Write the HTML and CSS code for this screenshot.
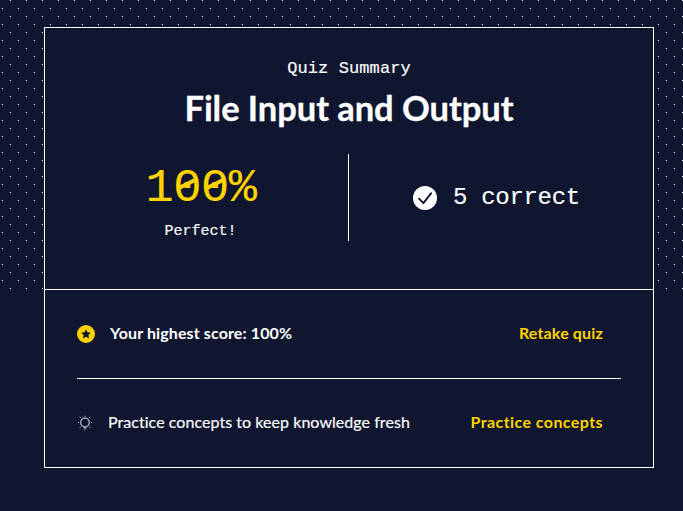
FILE: index.html
```html
<!DOCTYPE html>
<html lang="en">
<head>
<meta charset="utf-8">
<title>Quiz Summary</title>
<link rel="stylesheet" href="styles.css">
</head>
<body>
<div class="page">
  <main class="card">
    <section class="summary">
      <p class="eyebrow">Quiz Summary</p>
      <h1 class="title">File Input and Output</h1>
      <div class="results">
        <div class="score">
          <p class="percent">1<span class="zero">0</span><span class="zero">0</span>%</p>
          <p class="verdict">Perfect!</p>
        </div>
        <div class="tally">
          <svg class="check" viewBox="0 0 24 24" width="24" height="24"><circle cx="12" cy="12" r="12" fill="#fff"/><path d="M6 12.700l4.400 4.400L18.200 7.200" fill="none" stroke="#10162f" stroke-width="1.900" stroke-linecap="round" stroke-linejoin="round"/></svg>
          <span class="correct">5 correct</span>
        </div>
      </div>
    </section>
    <section class="actions">
      <div class="row">
        <svg class="star" viewBox="0 0 18 18" width="18" height="18"><circle cx="9" cy="9" r="9" fill="#ffd300"/><path d="M9 4.200l1.450 3.150 3.450.4-2.550 2.350.7 3.400L9 11.800l-3.050 1.700.7-3.400L4.100 7.750l3.450-.4z" fill="#10162f"/></svg>
        <span class="label strong">Your highest score: 100%</span>
        <a class="link retake">Retake quiz</a>
      </div>
      <div class="row">
        <svg class="bulb" viewBox="0 0 16 16" width="16" height="16" fill="none" stroke="#b7b9c1"><circle cx="8" cy="7.500" r="4.300" stroke-width="1.300"/><path d="M6.500 12.300h3M8 12.500v2.700M8 .7v1M1 7.500h1M14 7.500h1M2.700 1.700l1 1.200M13.300 1.700l-1 1.200M2.700 12.800l1-1M13.300 12.800l-1-1"/></svg>
        <span class="label tip">Practice concepts to keep knowledge fresh</span>
        <a class="link practice">Practice concepts</a>
      </div>
    </section>
  </main>
</div>
</body>
</html>
```
FILE: styles.css
```css
* { box-sizing: border-box; }
body { margin: 0; background: #10162f; color: #fff; font-family: Lato, sans-serif; font-variant-ligatures: none; }
p, h1 { margin: 0; }
.page {
  height: 511px;
  padding: 27px 29px 0 44px;
  background:
    linear-gradient(#10162f, #10162f) 0 289px / 100% 222px no-repeat,
    conic-gradient(from 90deg at 15px 15px, #fff 25%, transparent 0) -5px -15px / 16px 16px,
    conic-gradient(from 90deg at 15px 15px, #fff 25%, transparent 0) -13px -7px / 16px 16px;
}
.card { height: 441px; border: 1px solid #fff; background: #10162f; }
.summary { height: 262px; padding-top: 29px; border-bottom: 1px solid #fff; text-align: center; }
.eyebrow, .percent, .verdict, .correct { font-family: "Liberation Mono", monospace; white-space: nowrap; -webkit-text-stroke: .15px currentColor; }
.eyebrow { font-size: 17px; line-height: 24px; letter-spacing: .1px; }
.title { margin-top: 6px; font-size: 34.500px; line-height: 42px; font-weight: 700; letter-spacing: -.05px; white-space: nowrap; -webkit-text-stroke: .3px currentColor; }
.results { display: grid; grid-template-columns: 304px 1fr; height: 87px; margin-top: 25px; }
.score { border-right: 1px solid #fff; }
.percent { width: 312px; font-size: 47px; line-height: 56px; color: #ffd300; margin-top: 7px; letter-spacing: -.5px; }
.zero { position: relative; }
.zero::after {
  content: "";
  position: absolute;
  left: 5px;
  top: 20px;
  width: 18px;
  height: 4px;
  background: #ffd300;
  transform: rotate(-27deg);
}
.verdict { width: 311px; font-size: 15px; line-height: 18px; margin-top: 6px; }
.tally { display: flex; align-items: center; gap: 16px; padding-left: 64px; }
.correct { font-size: 24px; line-height: 28px; letter-spacing: -.3px; }
.actions { padding: 0 32px; }
.row { display: flex; align-items: center; height: 88px; }
.row + .row { height: 89px; border-top: 1px solid #fff; }
.label { font-size: 16px; line-height: 24px; margin: -3px 0 0 15px; white-space: nowrap; }
.strong { font-weight: 700; letter-spacing: .12px; }
.tip { letter-spacing: .05px; -webkit-text-stroke: .15px currentColor; }
.link { margin: -3px 18px 0 auto; font-size: 16px; line-height: 24px; font-weight: 700; color: #ffd300; white-space: nowrap; }
.retake { letter-spacing: .15px; }
.practice { letter-spacing: .42px; }
```
